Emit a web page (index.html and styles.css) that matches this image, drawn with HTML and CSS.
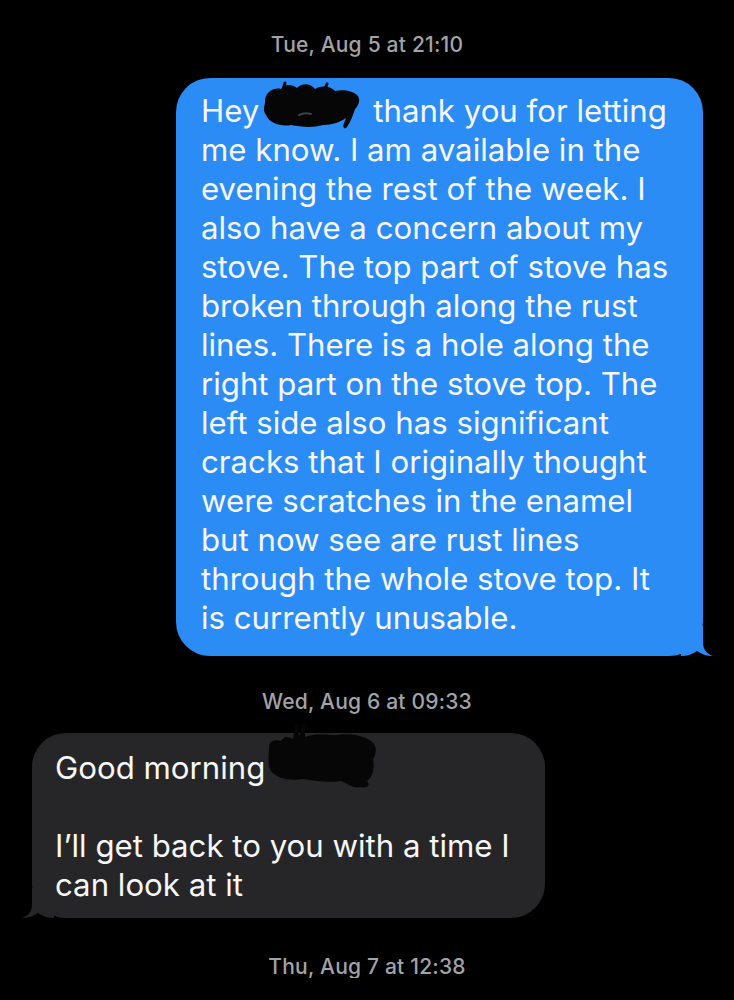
FILE: index.html
```html
<!DOCTYPE html>
<html lang="en">
<head>
<meta charset="utf-8">
<title>Messages</title>
<link rel="stylesheet" href="styles.css">
</head>
<body>
<main class="thread">
  <div class="stamp stamp-first">Tue, Aug 5 at 21:10</div>
  <div class="row row-out">
    <div class="bubble bubble-out">
      <p class="msg">Hey<span class="redact redact-a"><svg viewBox="0 0 100 50" width="100" height="50"><path d="M4 22 C3 12 12 6 20 8 C24 2 32 4 36 7 C42 1 50 3 54 8 C60 4 70 5 74 10 C82 8 92 10 96 14 C100 18 98 24 94 28 C92 34 90 40 86 46 C84 49 81 47 83 42 L85 37 C79 41 72 44 62 44 C52 47 40 46 30 44 C20 46 8 42 5 34 C2 30 3 26 4 22 Z" fill="#060606"/><path d="M38 34 C42 32 46 32 50 33" stroke="#3c4048" stroke-width="2" fill="none" stroke-linecap="round"/><path d="M22 9 L24 2 M64 8 L66 3" stroke="#060606" stroke-width="3" stroke-linecap="round"/></svg></span>thank you for letting<br>me know. I am available in the<br>evening the rest of the week. I<br>also have a concern about my<br>stove. The top part of stove has<br>broken through along the rust<br>lines. There is a hole along the<br>right part on the stove top. The<br>left side also has significant<br>cracks that I originally thought<br>were scratches in the enamel<br>but now see are rust lines<br>through the whole stove top. It<br>is currently unusable.</p>
      <svg class="tail tail-out" viewBox="0 0 32 30" width="32" height="30"><path d="M22 0 L22 16 C22 24 26 28 32 30 C26 30 20 28 16 25 C12 28 6 30 0 30 L0 0 Z"/></svg>
    </div>
  </div>
  <div class="stamp stamp-mid">Wed, Aug 6 at 09:33</div>
  <div class="row row-in">
    <div class="bubble bubble-in">
      <p class="msg">Good morning<span class="redact redact-b"><svg viewBox="0 0 112 66" width="112" height="66"><path d="M2 24 C2 18 8 16 14 18 C18 12 22 14 26 16 L28 2 C29 0 31 0 31 3 L32 14 L35 2 C36 0 38 1 38 4 L38 14 C48 10 60 12 70 12 C82 10 96 12 104 18 C110 22 110 30 106 36 C108 44 106 54 100 58 C104 62 100 66 94 64 C86 66 80 60 74 58 C62 60 48 58 36 56 C24 58 10 56 4 48 C0 42 2 32 2 24 Z" fill="#060606"/></svg></span><br><br>I’ll get back to you with a time I<br>can look at it</p>
      <svg class="tail tail-in" viewBox="0 0 32 30" width="32" height="30"><path d="M10 0 L10 16 C10 24 6 28 0 30 C6 30 12 28 16 25 C20 28 26 30 32 30 L32 0 Z"/></svg>
    </div>
  </div>
  <div class="stamp stamp-last">Thu, Aug 7 at 12:38</div>
</main>
</body>
</html>
```
FILE: styles.css
```css
html, body {
  margin: 0;
  padding: 0;
  background: #000;
}
body {
  font-family: Inter, "Liberation Sans", Arial, sans-serif;
  color: #f7f7f7;
}
.thread {
  display: flex;
  flex-direction: column;
  padding: 34px 0 0 0;
}
.stamp {
  text-align: center;
  color: #a3a3a6;
  font-size: 21px;
  font-weight: 500;
  letter-spacing: 0.2px;
  line-height: 22px;
}
.stamp-first {
  margin-bottom: 22px;
}
.stamp-mid {
  margin-top: 35px;
  margin-bottom: 20px;
}
.stamp-last {
  margin-top: 38px;
}
.row {
  display: flex;
}
.row-out {
  justify-content: flex-end;
  padding-right: 31px;
}
.row-in {
  justify-content: flex-start;
  padding-left: 32px;
}
.bubble {
  position: relative;
  border-radius: 34px;
}
.msg {
  margin: 0;
  font-size: 31.2px;
  line-height: 39px;
  white-space: nowrap;
}
.bubble-out {
  background: #2b8cf6;
  width: 527px;
  box-sizing: border-box;
  padding: 14px 16px 18px 25px;
}
.bubble-in {
  background: #262628;
  width: 513px;
  box-sizing: border-box;
  padding: 16px 16px 13px 23px;
}
.tail {
  position: absolute;
  bottom: 0;
  display: block;
}
.tail-out {
  right: -10px;
  fill: #2b8cf6;
}
.tail-in {
  left: -10px;
  fill: #262628;
}
.redact {
  display: inline-block;
  position: relative;
  width: 114px;
  height: 30px;
  vertical-align: -6px;
}
.redact svg {
  position: absolute;
  display: block;
}
.redact-a svg {
  left: 2px;
  top: -17px;
}
.redact-b {
  width: 116px;
}
.redact-b svg {
  left: 2px;
  top: -32px;
}
```
